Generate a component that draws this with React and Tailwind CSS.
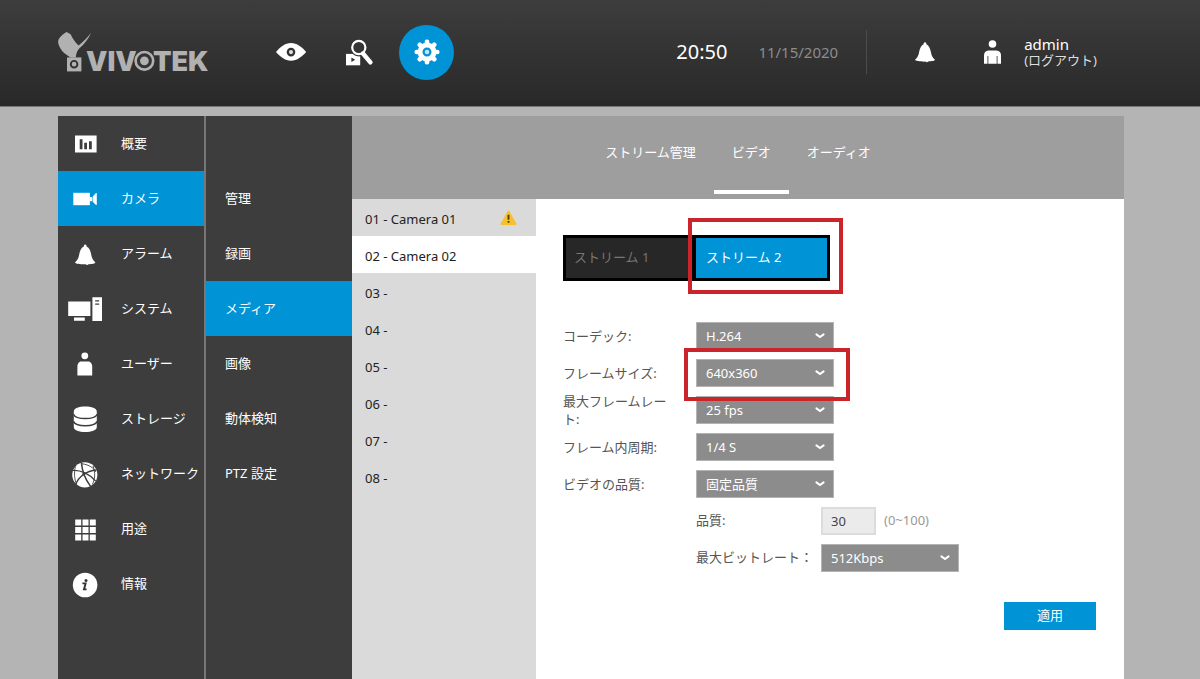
import React from 'react';

const ACCENT = '#0093d5';

function Logo() {
  return (
    <svg width="150" height="58" viewBox="58 23 150 58" role="img" aria-label="VIVOTEK" fill="#b1b1b1">
      <path d="M66.6 32 C62 34.5 57.6 38.5 58.2 42.8 C59.5 49 63.5 53.5 70.5 57.4 L75.8 57.4 C76.2 53.5 77.2 50.8 79.2 48.6 C84.6 43.8 88.6 38.6 91.2 32.4 C87.4 37.6 83.4 41.6 78.6 45.4 C75.6 42.6 72.6 38.6 70.6 34.2 Z" />
      <rect x="67" y="57.4" width="14.4" height="14" />
      <circle cx="74.1" cy="64.2" r="3.3" fill="none" stroke="#323232" strokeWidth="1.9" />
      <text x="86" y="70.6" fontFamily="Inter, sans-serif" fontWeight="900" fontSize="27">VIV</text>
      <text x="153" y="70.6" fontFamily="Inter, sans-serif" fontWeight="900" fontSize="27">TEK</text>
      <circle cx="144.4" cy="60.8" r="10.8" fill="#343434" />
      <circle cx="144.4" cy="60.8" r="8.8" fill="none" stroke="#b1b1b1" strokeWidth="2.6" />
      <circle cx="144.4" cy="60.8" r="4.4" />
    </svg>
  );
}

function EyeIcon() {
  return (
    <svg width="32" height="20" viewBox="275 41.7 32 20" aria-hidden="true">
      <path d="M276 51.7 C280 47 285 42.8 291 42.8 C297 42.8 302 47 306.2 51.7 C302 56.4 297 60.4 291 60.4 C285 60.4 280 56.4 276 51.7Z" fill="#fff" />
      <circle cx="291" cy="51.8" r="3.2" fill="#ddd" stroke="#333" strokeWidth="2.2" />
    </svg>
  );
}

function SearchVideoIcon() {
  return (
    <svg width="28" height="27" viewBox="345 38.5 28 27" aria-hidden="true">
      <rect x="346" y="53.4" width="14.2" height="11.4" fill="#fff" />
      <circle cx="358.8" cy="47" r="9" fill="#353535" />
      <path d="M362.6 52.6 L371 62.4" stroke="#343434" strokeWidth="7" />
      <circle cx="358.8" cy="47" r="6.6" fill="none" stroke="#fff" strokeWidth="2.2" />
      <path d="M363 53 L370.4 61.8" stroke="#fff" strokeWidth="4.4" strokeLinecap="round" />
      <path d="M351.4 57 L355.2 59.3 L351.4 61.6Z" fill="#333" />
    </svg>
  );
}

function GearIcon() {
  return (
    <svg width="28" height="28" viewBox="-14 -14 28 28" aria-hidden="true">
      <g fill="#fff">
        <circle r="9.4" />
        {[0, 45, 90, 135, 180, 225, 270, 315].map((a) => (
          <rect key={a} x="-2.3" y="-12.5" width="4.6" height="6" rx="2" transform={`rotate(${a})`} />
        ))}
      </g>
      <circle r="3.4" fill="#c5e4f4" stroke={ACCENT} strokeWidth="2.2" />
    </svg>
  );
}

function BellShape() {
  return (
    <path
      fill="#fff"
      d="M10.2 0 C11.2 0 11.6 .8 11.6 2 C14.4 3.4 15.6 6.6 16.2 10 C16.8 13.6 18 15.8 20.4 18 C20.2 19 17 19.6 13.4 19.7 C13 20.6 11.4 20.8 10.6 19.8 C6 19.9 .4 19.4 0 18 C2.4 15.8 3.6 13.6 4.2 10 C4.8 6.6 6 3.4 8.8 2 C8.8 .8 9.2 0 10.2 0Z"
    />
  );
}

function HeaderBell() {
  return (
    <svg width="20" height="21" viewBox="0 0 20.4 21" aria-hidden="true">
      <BellShape />
    </svg>
  );
}

function HeaderPerson() {
  return (
    <svg width="17" height="24" viewBox="0 0 17 24" aria-hidden="true" fill="#fff">
      <circle cx="8.5" cy="4" r="3.8" />
      <path d="M4.5 10.4 H12.5 C15.5 10.4 17 12.5 17 15.5 V23.8 H0 V15.5 C0 12.5 1.5 10.4 4.5 10.4Z" />
      <path d="M3.9 16 V24 M13.1 16 V24" stroke="#555" strokeWidth="1" />
    </svg>
  );
}

const navIcons = {
  overview: (
    <>
      <rect x="8" y="5.5" width="21.6" height="17" />
      <path fill="#3d3d3d" d="M12.7 9.2h2.8v10h-2.8z M17.2 12.8h2.8v6.4h-2.8z M22 11.3h2.8v7.9h-2.8z" />
    </>
  ),
  camera: (
    <>
      <rect x="6.3" y="7.8" width="16.6" height="12.4" />
      <path d="M22.9 12 H25.2 L29 8 C29.4 8 29.8 8 29.8 8.6 V19.4 C29.8 20 29.4 20 29 20 L25.2 16.2 H22.9Z" />
      <path d="M25.4 9 V19" stroke={ACCENT} strokeWidth=".6" />
    </>
  ),
  alarm: (
    <g transform="translate(8 4.5)">
      <BellShape />
    </g>
  ),
  system: (
    <path d="M1.2 6.5h22.2v14.6H1.2z M7 22.6h10.8v3.2H7z M25.4 2.2H35v23.8h-9.6z M28.2 5.2v1.2h4V5.2z M28.2 8.6v1.2h4V8.6z" fillRule="evenodd" />
  ),
  user: (
    <>
      <circle cx="17.8" cy="5.8" r="3.4" />
      <path d="M14.4 11.4 H21 C24 11.4 25.2 14 25.2 16.6 V25.6 H10.4 V16.6 C10.4 14 11.6 11.4 14.4 11.4Z" />
    </>
  ),
  storage: (
    <>
      <path d="M6.8 6.6 C6.8 3 12 1.4 18.2 1.4 C24.4 1.4 29.8 3 29.8 6.6 V22 C29.8 25.2 24.4 27 18.2 27 C12 27 6.8 25.2 6.8 22Z" />
      <path d="M6.4 9.2 C9 15 27.6 15 30.2 9.2 M6.4 16.4 C9 22.2 27.6 22.2 30.2 16.4" fill="none" stroke="#3d3d3d" strokeWidth="1.5" />
    </>
  ),
  network: (
    <>
      <circle cx="17.8" cy="14.8" r="12.6" />
      <g fill="none" stroke="#3d3d3d">
        <path d="M14.4 2.6 C15 10 18 19 23.6 26.4" strokeWidth="1.5" />
        <path d="M9 24 C11.4 17 19 11 29.4 10" strokeWidth="1.5" />
        <path d="M5.8 10.4 C13.6 9.8 22.6 14 28.6 21" strokeWidth="1.2" />
        <path d="M8.4 6.4 C7 12 7.2 19 9.6 24.4" strokeWidth=".9" />
        <path d="M15 3.8 C22 4.6 27 8 28.6 12 M26 6 C28.6 13 28 19 25.4 24.4" strokeWidth=".9" />
      </g>
      <circle cx="16.8" cy="14" r="1.6" fill="#3d3d3d" />
    </>
  ),
  apps: (
    <path d="M8.2 4.6h6v6h-6z M15.5 4.6h6v6h-6z M22.8 4.6h6v6h-6z M8.2 12h6v6h-6z M15.5 12h6v6h-6z M22.8 12h6v6h-6z M8.2 19.4h6v6h-6z M15.5 19.4h6v6h-6z M22.8 19.4h6v6h-6z" />
  ),
  info: (
    <>
      <circle cx="18.1" cy="15" r="12.3" />
      <circle cx="19" cy="10.4" r="1.5" fill="#333" />
      <path d="M15.4 13.4 H18.6 L17 19.4 H19.6" fill="none" stroke="#333" strokeWidth="1.9" />
    </>
  ),
};

function NavIcon({ name }) {
  return (
    <svg width="36" height="28" viewBox="0 0 36 28" fill="#fff" aria-hidden="true" className="shrink-0">
      {navIcons[name]}
    </svg>
  );
}

const mainNav = [
  ['overview', '概要'],
  ['camera', 'カメラ'],
  ['alarm', 'アラーム'],
  ['system', 'システム'],
  ['user', 'ユーザー'],
  ['storage', 'ストレージ'],
  ['network', 'ネットワーク'],
  ['apps', '用途'],
  ['info', '情報'],
];

const subNav = ['管理', '録画', 'メディア', '画像', '動体検知', 'PTZ 設定'];

const tabs = ['ストリーム管理', 'ビデオ', 'オーディオ'];

const cameras = ['01 - Camera 01', '02 - Camera 02', '03 -', '04 -', '05 -', '06 -', '07 -', '08 -'];

const fields = [
  { id: 'codec', label: 'コーデック:', value: 'H.264' },
  { id: 'frame-size', label: 'フレームサイズ:', value: '640x360', marked: true },
  { id: 'frame-rate', label: '最大フレームレート:', value: '25 fps' },
  { id: 'intra', label: 'フレーム内周期:', value: '1/4 S' },
  { id: 'quality-mode', label: 'ビデオの品質:', value: '固定品質' },
];

function SelectBox({ id, value, marked }) {
  return (
    <div className="relative w-[138px]">
      <select
        id={id}
        defaultValue={value}
        className="block h-7 w-full appearance-none rounded-none border border-[#b4b4b4] bg-[#8c8c8c] pl-[9px] pr-7 pt-[2px] text-[13px] text-white"
      >
        <option>{value}</option>
      </select>
      <svg
        width="10"
        height="6"
        viewBox="0 0 10 6"
        aria-hidden="true"
        className="pointer-events-none absolute right-[9px] top-[11px]"
      >
        <path d="M1.4 1.4 L5 4 L8.6 1.4" fill="none" stroke="#fff" strokeWidth="2" strokeLinecap="round" />
      </svg>
      {marked && (
        <span className="pointer-events-none absolute -bottom-[14px] -left-3 -right-4 -top-[11px] z-10 border-4 border-[#cb242b]" />
      )}
    </div>
  );
}

function WarningIcon() {
  return (
    <svg width="17" height="16" viewBox="0 0 17 16" role="img" aria-label="警告">
      <path d="M8.5 1.4 L15.6 14 H1.4Z" fill="#f5c12e" stroke="#f5c12e" strokeWidth="1.8" strokeLinejoin="round" />
      <path d="M8.5 4.8 V9.8 M8.5 11 V12.8" stroke="#4a3c10" strokeWidth="1.8" />
    </svg>
  );
}

function Header() {
  return (
    <header className="flex h-[107px] items-center border-b border-[#777] bg-linear-to-b from-[#3d3d3d] to-[#292929] pb-[2px] pl-[58px] pr-[103px] text-white">
      <Logo />
      <nav className="ml-[55px] flex items-center gap-[13px]">
        <button type="button" aria-label="ライブ" className="flex size-[55px] items-center justify-center">
          <EyeIcon />
        </button>
        <button type="button" aria-label="検索" className="flex size-[55px] items-center justify-center">
          <SearchVideoIcon />
        </button>
        <button type="button" aria-label="設定" className="flex size-[55px] items-center justify-center rounded-full bg-[#0093d5]">
          <GearIcon />
        </button>
      </nav>
      <div className="ml-auto flex items-center">
        <span className="text-xl">20:50</span>
        <span className="ml-[31px] text-[15px] text-[#8c8c8c]">11/15/2020</span>
        <span className="ml-7 h-11 w-px bg-[#4c4c4c]" />
        <button type="button" aria-label="通知" className="ml-12">
          <HeaderBell />
        </button>
        <span className="ml-[49px]">
          <HeaderPerson />
        </span>
        <div className="ml-[23px] flex flex-col">
          <span className="text-[15px] leading-4">admin</span>
          <a href="#logout" className="text-[13px] leading-4 text-[#dedede]">
            (ログアウト)
          </a>
        </div>
      </div>
    </header>
  );
}

export default function App() {
  return (
    <div className="flex min-h-screen flex-col bg-[#b4b4b4] font-['Noto_Sans','Noto_Sans_CJK_JP',sans-serif] text-[13px]">
      <Header />
      <main className="flex flex-1 pl-[58px] pr-[76px] pt-[9px]">
        <nav className="flex w-[148px] shrink-0 flex-col border-r-2 border-[#777] bg-[#3d3d3d] text-white">
          {mainNav.map(([icon, label]) => (
            <a
              key={icon}
              href={`#${icon}`}
              className={`flex h-[55px] items-center gap-[18px] whitespace-nowrap pl-[9px] ${icon === 'camera' ? 'bg-[#0093d5]' : ''}`}
            >
              <NavIcon name={icon} />
              <span className="pt-px">{label}</span>
            </a>
          ))}
        </nav>
        <nav className="flex w-[146px] shrink-0 flex-col bg-[#3d3d3d] pt-[55px] text-white">
          {subNav.map((label) => (
            <a
              key={label}
              href={`#${label}`}
              className={`flex h-[55px] items-center pl-[19px] pt-px ${label === 'メディア' ? 'bg-[#0093d5]' : ''}`}
            >
              {label}
            </a>
          ))}
        </nav>
        <div className="flex flex-1 flex-col">
          <div className="flex h-[83px] items-start justify-center bg-[#9e9e9e]" role="tablist">
            {tabs.map((label) => (
              <button
                key={label}
                type="button"
                role="tab"
                aria-selected={label === 'ビデオ'}
                className={`h-[78px] border-b-4 px-[18px] text-white ${label === 'ビデオ' ? 'border-white' : 'border-transparent'}`}
              >
                {label}
              </button>
            ))}
          </div>
          <div className="flex flex-1">
            <ul className="w-[184px] shrink-0 bg-[#dadada] text-[#222]">
              {cameras.map((name, i) => (
                <li key={name}>
                  <button
                    type="button"
                    className={`flex h-[37px] w-full items-center justify-between pl-[13px] pr-[19px] ${i === 1 ? 'bg-white' : ''}`}
                  >
                    <span className="pt-1">{name}</span>
                    {i === 0 && <WarningIcon />}
                  </button>
                </li>
              ))}
            </ul>
            <section className="flex-1 bg-white pl-[27px] pr-7 pt-9 text-[#555]">
              <div className="flex h-[46px] w-[267px] gap-1 border-[3px] border-black bg-black">
                <button type="button" className="w-[126px] bg-[#272727] pl-2 text-left text-[#767676]">
                  ストリーム 1
                </button>
                <button type="button" className="relative flex-1 bg-[#0093d5] pl-[10px] text-left text-white">
                  ストリーム 2
                  <span className="pointer-events-none absolute -bottom-4 -left-2 -right-4 -top-5 border-4 border-[#cb242b]" />
                </button>
              </div>
              <form className="mt-9" onSubmit={(e) => e.preventDefault()}>
                {fields.map((f) => (
                  <div key={f.id} className="flex h-[37px] items-center">
                    <div className="w-[133px] shrink-0 pr-6">
                      <label htmlFor={f.id} className="block leading-[18px]">
                        {f.label}
                      </label>
                    </div>
                    <SelectBox id={f.id} value={f.value} marked={f.marked} />
                  </div>
                ))}
                <div className="flex h-[37px] items-center pl-[133px]">
                  <label htmlFor="quality" className="w-[125px] shrink-0">
                    品質:
                  </label>
                  <input
                    id="quality"
                    type="text"
                    defaultValue="30"
                    className="h-7 w-[55px] rounded-none border-2 border-[#dcdcdc] bg-[#ebebeb] pl-2 text-[13px] text-[#444]"
                  />
                  <span className="ml-2 text-[#999]">(0~100)</span>
                </div>
                <div className="flex h-[37px] items-center pl-[133px]">
                  <label htmlFor="bitrate" className="w-[125px] shrink-0 whitespace-nowrap">
                    最大ビットレート：
                  </label>
                  <SelectBox id="bitrate" value="512Kbps" />
                </div>
                <div className="mt-[26px] flex justify-end">
                  <button type="submit" className="h-7 w-[92px] bg-[#0093d5] text-white">
                    適用
                  </button>
                </div>
              </form>
            </section>
          </div>
        </div>
      </main>
    </div>
  );
}
